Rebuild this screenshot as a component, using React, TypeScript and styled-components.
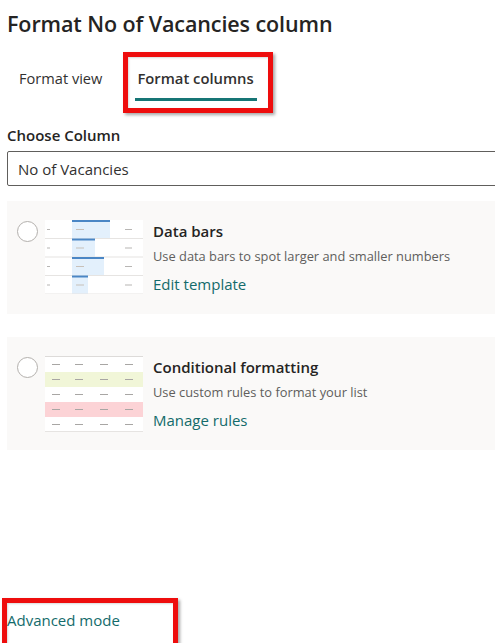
import React from "react";
import styled, { createGlobalStyle } from "styled-components";

const Global = createGlobalStyle`
  html, body { margin: 0; padding: 0; background: #ffffff; overflow: hidden; }
  body { font-family: "Open Sans", "Noto Sans", sans-serif; color: #323130; }
  * { box-sizing: border-box; }
`;

const Page = styled.div`
  position: relative;
  width: 495px;
  height: 643px;
  overflow: hidden;
  display: flex;
  flex-direction: column;
  padding: 10px 0 0 7px;
`;

const Title = styled.h1`
  margin: 0;
  font-size: 21.5px;
  line-height: 28px;
  font-weight: 600;
  color: #252423;
  letter-spacing: -0.1px;
`;

const Tabs = styled.div`
  display: flex;
  margin-top: 26px;
`;

const Tab = styled.div<{ $active?: boolean }>`
  position: relative;
  padding: 0 12px;
  margin-right: ${(p) => (p.$active ? "0" : "11px")};
  font-size: ${(p) => (p.$active ? "14.8px" : "14.6px")};
  line-height: 28px;
  height: 38px;
  font-weight: ${(p) => (p.$active ? 600 : 400)};
  color: #323130;
  &::after {
    content: "";
    display: ${(p) => (p.$active ? "block" : "none")};
    position: absolute;
    left: 10px;
    right: 9px;
    bottom: 1px;
    height: 3px;
    background: #167575;
  }
`;

const Label = styled.div`
  margin-top: 23px;
  font-size: 15px;
  line-height: 20px;
  font-weight: 600;
  color: #252423;
`;

const Select = styled.div`
  margin-top: 6px;
  margin-right: -4px;
  height: 35px;
  border: 1px solid #605e5c;
  border-radius: 2px;
  display: flex;
  align-items: center;
  padding-left: 10px;
  font-size: 15px;
  color: #323130;
`;

const Cards = styled.div`
  display: flex;
  flex-direction: column;
  gap: 23px;
  margin-top: 15px;
`;

const Card = styled.div`
  background: #faf9f8;
  height: 113px;
  margin-right: -4px;
  display: flex;
  align-items: flex-start;
  padding: 19px 0 0 10px;
`;

const Radio = styled.div`
  width: 21px;
  height: 21px;
  border-radius: 50%;
  border: 1px solid #b3b0ad;
  background: #ffffff;
  margin-top: 1px;
  flex: none;
`;

const Thumb = styled.svg`
  margin-left: 7px;
  flex: none;
  display: block;
`;

const Info = styled.div`
  margin-left: 10px;
  margin-top: 1px;
  display: flex;
  flex-direction: column;
`;

const CardTitle = styled.div`
  font-size: 15px;
  line-height: 20px;
  font-weight: 600;
  color: #252423;
`;

const CardDesc = styled.div`
  margin-top: 6px;
  font-size: 12.85px;
  line-height: 18px;
  color: #605e5c;
`;

const CardLink = styled.a`
  margin-top: 9px;
  font-size: 15px;
  line-height: 20px;
  color: #136b6b;
  text-decoration: none;
`;

const Advanced = styled.a`
  margin-top: auto;
  margin-bottom: 13px;
  font-size: 15px;
  line-height: 20px;
  color: #136b6b;
  text-decoration: none;
`;

const Highlight = styled.div<{ $x: number; $y: number; $w: number; $h: number }>`
  position: absolute;
  left: ${(p) => p.$x}px;
  top: ${(p) => p.$y}px;
  width: ${(p) => p.$w}px;
  height: ${(p) => p.$h}px;
  border: 5px solid #ee0d0d;
  box-shadow: 2px 2px 3px rgba(0, 0, 0, 0.35), inset 1px 1px 2px rgba(0, 0, 0, 0.15);
  pointer-events: none;
`;

const DataBarsThumb = () => {
  const rows = [
    { y: 0, w: 38 },
    { y: 18.5, w: 23 },
    { y: 37, w: 32 },
    { y: 55.5, w: 16 },
  ];
  return (
    <Thumb width="98" height="74" viewBox="0 0 98 74">
      <rect x="0" y="0" width="98" height="74" fill="#ffffff" />
      {rows.map((r, i) => (
        <g key={i}>
          <rect x="27" y={r.y} width={r.w} height="18.5" fill="#e3f0fc" />
          <rect x="27" y={r.y} width={r.w} height="2" fill="#4a86c5" />
          <rect x="2" y={r.y + 9} width="3" height="1" fill="#b8b6b4" />
          <rect x="31" y={r.y + 9} width="8" height="1" fill="#c8c0b8" />
          <rect x="80" y={r.y + 9} width="7" height="1" fill="#b8b6b4" />
          <rect x="0" y={r.y + 18} width="98" height="1" fill="#e6e4e2" />
        </g>
      ))}
    </Thumb>
  );
};

const CondThumb = () => {
  const fills = ["#ffffff", "#f1f6d8", "#ffffff", "#fcd3d6", "#ffffff"];
  return (
    <Thumb width="98" height="76" viewBox="0 0 98 76">
      <rect x="0" y="0" width="98" height="1" fill="#dddbd9" />
      {fills.map((f, i) => (
        <g key={i}>
          <rect x="0" y={1 + i * 15} width="98" height="15" fill={f} />
          {[7, 30, 55, 80].map((x) => (
            <rect key={x} x={x} y={8 + i * 15} width="8" height="1" fill="#a8a6a4" />
          ))}
        </g>
      ))}
      <rect x="0" y="75" width="98" height="1" fill="#e6e4e2" />
    </Thumb>
  );
};

export default function App() {
  return (
    <>
      <Global />
      <Page>
        <Title>Format No of Vacancies column</Title>
        <Tabs>
          <Tab>Format view</Tab>
          <Tab $active>Format columns</Tab>
        </Tabs>
        <Label>Choose Column</Label>
        <Select>No of Vacancies</Select>
        <Cards>
          <Card>
            <Radio />
            <DataBarsThumb />
            <Info>
              <CardTitle>Data bars</CardTitle>
              <CardDesc>Use data bars to spot larger and smaller numbers</CardDesc>
              <CardLink>Edit template</CardLink>
            </Info>
          </Card>
          <Card>
            <Radio />
            <CondThumb />
            <Info>
              <CardTitle>Conditional formatting</CardTitle>
              <CardDesc>Use custom rules to format your list</CardDesc>
              <CardLink>Manage rules</CardLink>
            </Info>
          </Card>
        </Cards>
        <Advanced>Advanced mode</Advanced>
        <Highlight $x={123} $y={52} $w={150} $h={61} />
        <Highlight $x={2} $y={598} $w={176} $h={60} />
      </Page>
    </>
  );
}
